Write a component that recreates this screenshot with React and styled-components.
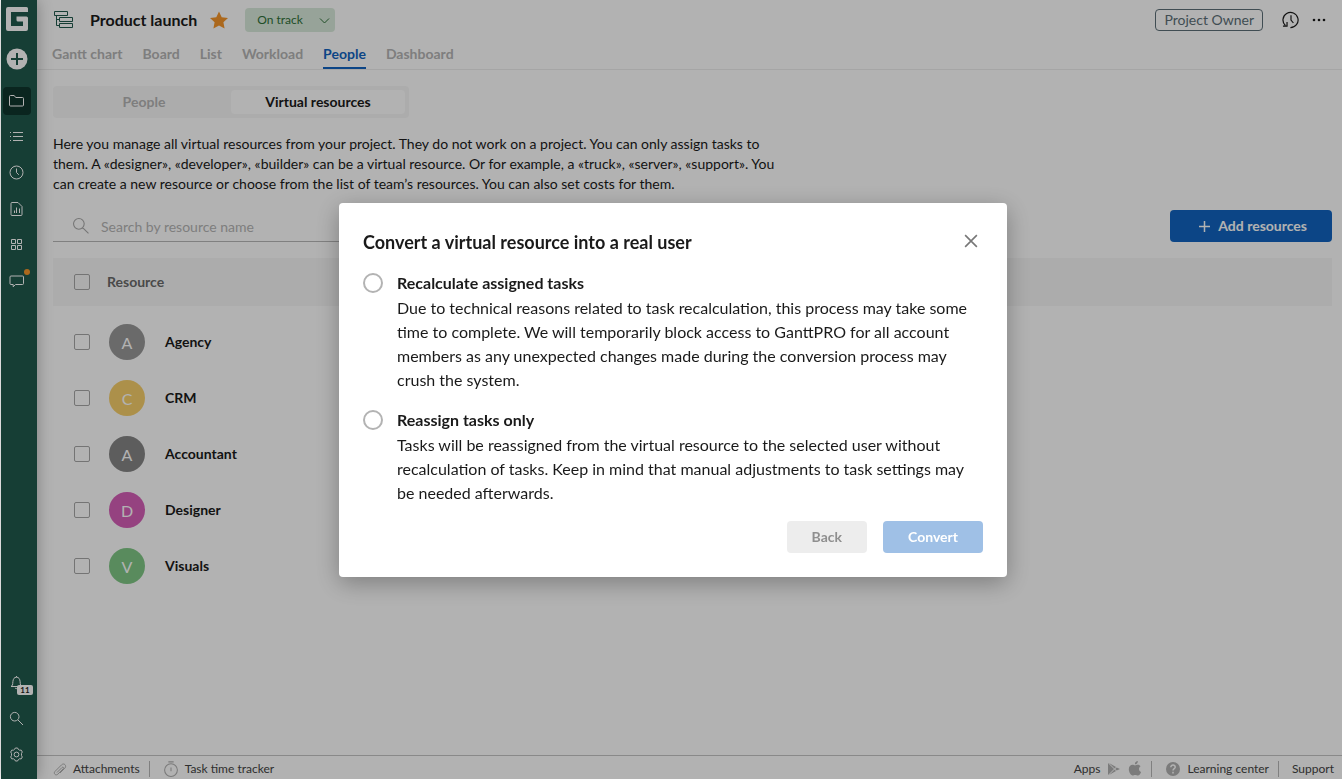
import React, { useState } from 'react'
import styled, { createGlobalStyle } from 'styled-components'

const GlobalStyle = createGlobalStyle`
  * {
    box-sizing: border-box;
  }

  body {
    margin: 0;
    background: #fff;
    color: #1a1a1a;
    font-family: Lato, 'Liberation Sans', sans-serif;
    font-size: 14px;
    line-height: 20px;
  }

  button, input, select {
    font: inherit;
    color: inherit;
    margin: 0;
  }

  button {
    padding: 0;
    border: 0;
    background: none;
    cursor: pointer;
  }

  svg {
    display: block;
    flex: none;
  }
`

const Page = styled.div`
  display: flex;
  min-height: 100vh;
  padding-left: 1px;
`

const Sidebar = styled.nav`
  display: flex;
  flex-direction: column;
  justify-content: space-between;
  flex: none;
  width: 36px;
  padding: 6px 2px 10px;
  background: #20594c;
  color: #fff;
  box-shadow: 0 0 16px rgba(0, 0, 0, 0.3);
  z-index: 1;
`

const SideGroup = styled.div`
  display: flex;
  flex-direction: column;
  gap: 8px;
`

const Brand = styled.a`
  display: flex;
  justify-content: center;
  width: 28px;
  height: 31px;
  padding-top: 1px;
  color: #fff;
`

const SideButton = styled.button`
  position: relative;
  display: flex;
  align-items: center;
  justify-content: center;
  width: 28px;
  height: 28px;
  padding: 0 1px 1px 0;
  border-radius: 4px;
  background: ${({ $active }) => ($active ? '#0f352d' : 'transparent')};
`

const AddButton = styled(SideButton)`
  margin-bottom: 6px;
  padding: 0;
`

const Dot = styled.span`
  position: absolute;
  top: 2px;
  right: 1px;
  width: 6px;
  height: 6px;
  border-radius: 50%;
  background: #f5962a;
`

const Counter = styled.span`
  position: absolute;
  left: 14px;
  top: 16px;
  width: 16px;
  height: 10px;
  border-radius: 2px;
  background: #fff;
  color: #222;
  font-size: 8px;
  font-weight: 700;
  line-height: 10px;
  text-align: center;
`

const Main = styled.div`
  display: flex;
  flex-direction: column;
  flex: 1;
  min-width: 0;
`

const Header = styled.header`
  height: 70px;
  border-bottom: 1px solid #ececec;
`

const TitleRow = styled.div`
  display: flex;
  align-items: center;
  height: 40px;
  padding: 0 14px 0 17px;
`

const Title = styled.h1`
  margin: 0 12px 0 17px;
  font-size: 16px;
  font-weight: 700;
`

const StatusButton = styled.button`
  display: flex;
  align-items: center;
  justify-content: space-between;
  width: 90px;
  height: 24px;
  margin-left: 16px;
  padding: 0 3px 0 12px;
  border-radius: 4px;
  background: #d9eadb;
  color: #2e7038;
  font-size: 12px;
`

const HeaderTools = styled.div`
  display: flex;
  align-items: center;
  gap: 10px;
  margin-left: auto;
`

const RoleTag = styled.span`
  margin-right: 9px;
  padding: 0 8px;
  border: 1px solid #5c6f77;
  border-radius: 4px;
  color: #5c6f77;
`

const Tabs = styled.div`
  display: flex;
  gap: 20px;
  padding: 0 15px;
`

const Tab = styled.a`
  height: 29px;
  padding-top: 4px;
  border-bottom: 2px solid ${({ $active }) => ($active ? '#1264c0' : 'transparent')};
  color: ${({ $active }) => ($active ? '#1264c0' : '#b5b5b5')};
  font-weight: 700;
  text-decoration: none;
`

const Content = styled.main`
  flex: 1;
  padding: 16px 10px 16px 16px;
`

const Segmented = styled.div`
  display: flex;
  width: 356px;
  height: 32px;
  padding: 4px;
  border-radius: 4px;
  background: #f7f7f7;
`

const Segment = styled.button`
  flex: 1;
  border-radius: 4px;
  background: ${({ $active }) => ($active ? '#fff' : 'transparent')};
  color: ${({ $active }) => ($active ? '#1a1a1a' : '#b5b5b5')};
  font-weight: 700;
`

const Intro = styled.p`
  max-width: 732px;
  margin: 16px 0;
`

const Toolbar = styled.div`
  display: flex;
  justify-content: space-between;
  height: 32px;
`

const SearchField = styled.label`
  display: flex;
  align-items: center;
  gap: 10px;
  width: 360px;
  padding-left: 20px;
  border-bottom: 1px solid #b8b8b8;
  color: #a8a8a8;

  input {
    flex: 1;
    padding: 3px 2px 0 2px;
    border: 0;
    outline: 0;
    background: none;
  }

  input::placeholder {
    color: #b5b5b5;
    opacity: 1;
  }
`

const Button = styled.button`
  display: flex;
  align-items: center;
  justify-content: center;
  height: 32px;
  padding: 0 25px;
  border-radius: 4px;
  background: ${({ $primary }) => ($primary ? '#1264c0' : '#ededed')};
  color: ${({ $primary }) => ($primary ? '#fff' : '#8f8f8f')};
  font-weight: 700;

  svg {
    margin: 0 6px 0 2px;
  }

  &:disabled {
    background: #9fc0e6;
    cursor: default;
  }
`

const Table = styled.table`
  width: 100%;
  margin-top: 16px;
  border-collapse: collapse;

  th, td {
    padding: 0;
    text-align: left;
  }

  th {
    height: 48px;
    background: #f7f7f7;
    color: #6a6a6a;
  }

  tbody td {
    height: 56px;
    font-weight: 700;
  }

  tbody::before {
    content: '';
    display: block;
    height: 8px;
  }
`

const CheckCell = styled.td`
  width: 54px;
`

const Checkbox = styled.input.attrs({ type: 'checkbox' })`
  appearance: none;
  display: block;
  width: 16px;
  height: 16px;
  margin: 0 0 0 21px;
  border: 1px solid #a6a6a6;
  border-radius: 2px;
`

const Resource = styled.div`
  display: flex;
  align-items: center;
  gap: 20px;
  padding-left: 2px;
`

const Avatar = styled.span`
  width: 36px;
  height: 36px;
  border-radius: 50%;
  background: ${({ $color }) => $color};
  color: #fff;
  font-size: 16px;
  font-weight: 400;
  line-height: 37px;
  text-align: center;
`

const Footer = styled.footer`
  display: flex;
  justify-content: space-between;
  height: 24px;
  padding: 0 8px 0 15px;
  border-top: 1px solid #c4c4c4;
  color: #444;
  font-size: 12px;
`

const FooterGroup = styled.div`
  display: flex;
  align-items: center;
  gap: 9px;
  padding-top: 3px;
`

const FooterLink = styled.a`
  display: flex;
  align-items: center;
  gap: 6px;
  color: inherit;
  text-decoration: none;

  svg {
    color: #b0b0b0;
  }
`

const Divider = styled.span`
  width: 1px;
  height: 16px;
  margin-right: 4px;
  background: #b8b8b8;
`

const Overlay = styled.div`
  position: fixed;
  inset: 0 0 0 1px;
  display: flex;
  align-items: center;
  justify-content: center;
  padding-left: 3px;
  background: rgba(0, 0, 0, 0.3);
  z-index: 2;
`

const Dialog = styled.section`
  width: 668px;
  max-width: 100%;
  padding: 24px;
  border-radius: 4px;
  background: #fff;
  box-shadow: 0 6px 24px rgba(0, 0, 0, 0.3);
`

const DialogHeader = styled.div`
  display: flex;
  justify-content: space-between;
  height: 28px;
  padding-right: 4px;

  button {
    color: #777;
  }
`

const DialogTitle = styled.h2`
  margin: 0;
  font-size: 18px;
  line-height: 30px;
`

const Option = styled.label`
  display: flex;
  gap: 14px;
  padding-top: 16px;
  font-size: 16px;
  line-height: 24px;

  strong {
    display: block;
    margin-bottom: 1px;
  }
`

const Radio = styled.input.attrs({ type: 'radio' })`
  appearance: none;
  flex: none;
  width: 20px;
  height: 20px;
  margin-top: 2px;
  border: 2px solid #b3b3b3;
  border-radius: 50%;

  &:checked {
    border: 6px solid #1264c0;
  }
`

const DialogActions = styled.div`
  display: flex;
  justify-content: flex-end;
  gap: 16px;
  margin-top: 16px;
`

const icons = {
  folder: <path d="M.5 12V3.500a1 1 0 0 1 1-1h3.700l1.500 2h6.800a1 1 0 0 1 1 1V12a1 1 0 0 1-1 1h-12a1 1 0 0 1-1-1Z" />,
  list: <path d="M1 3.500h1M4 3.500h10M1 7.500h1M4 7.500h10M1 11.500h1M4 11.500h10" />,
  clock: <path d="M14 7.500a6.500 6.500 0 1 1-13 0 6.500 6.500 0 0 1 13 0ZM7.500 3.500v4l2.300 2.300" />,
  report: <path d="M2 12.500v-10a1 1 0 0 1 1-1h6l4 4v8a1 1 0 0 1-1 1H3a1 1 0 0 1-1-1ZM5.500 12V9.500M7.500 12V6.500M10.500 12V7.500" />,
  grid: <path d="M2.500 2.500h4v4h-4ZM8.500 2.500h4v4h-4ZM2.500 8.500h4v4h-4ZM8.500 8.500h4v4h-4Z" />,
  chat: <path d="M1 10.500V4a1 1 0 0 1 1-1h11.500a1 1 0 0 1 1 1v6.500a1 1 0 0 1-1 1H6.500L4.200 13.800V11.500H2a1 1 0 0 1-1-1Z" />,
  bell: <path d="M2 11.500h11M3.500 10c.3-1 .2-2 .4-3.500.3-2.600 1.300-4.300 3.600-4.300s3.300 1.700 3.600 4.300c.2 1.500.1 2.500.400 3.500.300.700.700 1 1.500 1.500M3.500 10c-.3.700-.7 1-1.500 1.500M6 13c.8.8 2.200.8 3 0M7.500 2.200V1" />,
  search: <path d="M10 5.700a4.300 4.300 0 1 1-8.600 0 4.300 4.300 0 0 1 8.600 0ZM8.900 8.900l5.100 5.100" />,
  lens: <path d="M10.500 5.500a5 5 0 1 1-10 0 5 5 0 0 1 10 0ZM9 9l5.500 5.500" />,
  gear: <path d="M5.700 2.200 6.400 1h2.200l.7 1.400 1.300.8 1.600-.1 1.100 1.900-.8 1.400v2.200l.8 1.400-1.100 1.900-1.600-.1-1.300.8-.7 1.400H6.400l-.7-1.400-1.300-.8-1.600.1-1.100-1.900.8-1.400V6.400l-.8-1.400 1.100-1.900 1.600.1ZM9.900 7.500a2.400 2.400 0 1 1-4.800 0 2.400 2.400 0 0 1 4.800 0Z" />,
  chevron: <path d="m3 5.500 4.500 4.500L12 5.500" />,
  plus: <path d="M7.500 2v11M2 7.500h11" />,
  close: <path d="m2 2 11 11M13 2 2 13" />,
  history: <path d="M2.800 12.100A6.300 6.300 0 1 1 7 13.800M.800 12.600h3.400V9.200M7.500 3.500v4l2 2.500" />,
  clip: <path d="m5 10.500 5-5c1-1 2.200.2 1.300 1.200l-5.500 5.500c-2 2-4.800-.8-2.800-2.800l6.500-6.500c2.500-2.500 5.700.8 3.300 3.300L8 11" />,
  timer: <path d="M13.500 8.500a6 6 0 1 1-12 0 6 6 0 0 1 12 0ZM5 .800h5M7.500 6v3.500" />
}

const Icon = ({ name, size = 15, width = 1 }) => (
  <svg
    width={size}
    height={size}
    viewBox="0 0 15 15"
    fill="none"
    stroke="currentColor"
    strokeWidth={width}
    aria-hidden="true"
  >
    {icons[name]}
  </svg>
)

const tabs = ['Gantt chart', 'Board', 'List', 'Workload', 'People', 'Dashboard']

const resources = [
  { name: 'Agency', color: '#989898' },
  { name: 'CRM', color: '#f7cf6b' },
  { name: 'Accountant', color: '#868686' },
  { name: 'Designer', color: '#d65fb8' },
  { name: 'Visuals', color: '#80c886' }
]

const options = [
  {
    id: 'recalculate',
    title: 'Recalculate assigned tasks',
    text: 'Due to technical reasons related to task recalculation, this process may take some time to complete. We will temporarily block access to GanttPRO for all account members as any unexpected changes made during the conversion process may crush the system.'
  },
  {
    id: 'reassign',
    title: 'Reassign tasks only',
    text: 'Tasks will be reassigned from the virtual resource to the selected user without recalculation of tasks. Keep in mind that manual adjustments to task settings may be needed afterwards.'
  }
]

const SideNav = () => (
  <Sidebar>
    <SideGroup>
      <Brand href="#home" aria-label="Home">
        <svg width="22" height="24" viewBox="0 0 22 24">
          <path
            d="M2 0h18.500A1.500 1.500 0 0 1 22 1.500V5H5v14h12v-4.500h-5a1.500 1.500 0 0 1-1.500-1.500V9.500H20.500A1.500 1.500 0 0 1 22 11v11a2 2 0 0 1-2 2H2a2 2 0 0 1-2-2V2a2 2 0 0 1 2-2Z"
            fill="currentColor"
          />
        </svg>
      </Brand>
      <AddButton aria-label="Create">
        <svg width="22" height="22" viewBox="0 0 22 22">
          <circle cx="11" cy="11" r="10.500" fill="#fff" />
          <path d="M11 5v12M5 11h12" stroke="#20594c" strokeWidth="2" />
        </svg>
      </AddButton>
      <SideButton $active aria-label="Projects"><Icon name="folder" /></SideButton>
      <SideButton aria-label="My tasks"><Icon name="list" /></SideButton>
      <SideButton aria-label="Time log"><Icon name="clock" /></SideButton>
      <SideButton aria-label="Reports"><Icon name="report" /></SideButton>
      <SideButton aria-label="Portfolio"><Icon name="grid" /></SideButton>
      <SideButton aria-label="Comments">
        <Icon name="chat" />
        <Dot />
      </SideButton>
    </SideGroup>
    <SideGroup>
      <SideButton aria-label="Notifications">
        <Icon name="bell" />
        <Counter>11</Counter>
      </SideButton>
      <SideButton aria-label="Search"><Icon name="search" /></SideButton>
      <SideButton aria-label="Settings"><Icon name="gear" /></SideButton>
    </SideGroup>
  </Sidebar>
)

const ProjectHeader = () => (
  <Header>
    <TitleRow>
      <svg width="19" height="18" viewBox="0 0 19 18" fill="none" stroke="#20594c">
        <path d="M.500.500h13v4H.500ZM5.500 6.500h13v4h-13ZM5.500 12.500h13v4h-13ZM2.500 4.500v10h3M2.500 8.500h3" />
      </svg>
      <Title>Product launch</Title>
      <svg width="20" height="18" viewBox="0 0 20 18" fill="#f5962a">
        <path d="m10 .500 2.700 5.700 6.300.8-4.600 4.300 1.200 6.200-5.600-3-5.600 3 1.200-6.200L1 7l6.300-.8Z" />
      </svg>
      <StatusButton>
        On track
        <Icon name="chevron" />
      </StatusButton>
      <HeaderTools>
        <RoleTag>Project Owner</RoleTag>
        <button aria-label="History"><Icon name="history" size={18} /></button>
        <button aria-label="More">
          <svg width="18" height="18" viewBox="0 0 18 18" fill="currentColor">
            <circle cx="4" cy="9" r="1.300" />
            <circle cx="9" cy="9" r="1.300" />
            <circle cx="14" cy="9" r="1.300" />
          </svg>
        </button>
      </HeaderTools>
    </TitleRow>
    <Tabs>
      {tabs.map(tab => (
        <Tab key={tab} href="#tab" $active={tab === 'People'}>{tab}</Tab>
      ))}
    </Tabs>
  </Header>
)

const ResourceTable = () => (
  <Table>
    <thead>
      <tr>
        <CheckCell as="th"><Checkbox aria-label="Select all" /></CheckCell>
        <th>Resource</th>
      </tr>
    </thead>
    <tbody>
      {resources.map(({ name, color }) => (
        <tr key={name}>
          <CheckCell><Checkbox aria-label={name} /></CheckCell>
          <td>
            <Resource>
              <Avatar $color={color}>{name[0]}</Avatar>
              {name}
            </Resource>
          </td>
        </tr>
      ))}
    </tbody>
  </Table>
)

const StatusBar = () => (
  <Footer>
    <FooterGroup>
      <FooterLink href="#attachments"><Icon name="clip" />Attachments</FooterLink>
      <Divider />
      <FooterLink href="#tracker"><Icon name="timer" size={16} />Task time tracker</FooterLink>
    </FooterGroup>
    <FooterGroup>
      <FooterLink href="#apps">
        Apps
        <svg width="16" height="14" viewBox="0 0 16 14" fill="currentColor">
          <path d="M2 1v12l6-6ZM3 1l5.500 5.500L10 5ZM3 13l5.500-5.500L10 9ZM10.700 5.400 9.200 7l1.500 1.600L14 7Z" />
        </svg>
        <svg width="14" height="16" viewBox="0 0 14 16" fill="currentColor">
          <path d="M9.800 0c.1 1.900-1.300 3.300-2.900 3.300C6.700 1.600 8.200 0 9.800 0ZM7 4.400c.8 0 1.500-.7 2.800-.7 1.200 0 2.200.6 2.800 1.500-2.400 1.400-2 4.700.5 5.700-.6 1.700-1.800 3.600-3.200 3.600-1 0-1.500-.6-2.700-.6s-1.700.6-2.600.6C2.700 14.500.800 11 .800 8.300c0-2.800 1.800-4.500 3.700-4.500 1.100 0 1.900.6 2.500.6Z" />
        </svg>
      </FooterLink>
      <Divider />
      <FooterLink href="#learning">
        <svg width="16" height="16" viewBox="0 0 16 16">
          <circle cx="8" cy="8" r="7" fill="currentColor" />
          <path d="M5.800 6.200c.1-3 4.600-2.700 4.400 0-.1 1.500-2.200 1.500-2.200 3.300M8 10.800v1.700" fill="none" stroke="#fff" strokeWidth="1.500" />
        </svg>
        Learning center
      </FooterLink>
      <Divider />
      <FooterLink href="#support">Support</FooterLink>
    </FooterGroup>
  </Footer>
)

const ConvertDialog = () => {
  const [mode, setMode] = useState(null)

  return (
    <Overlay>
      <Dialog role="dialog" aria-labelledby="convert-title">
        <DialogHeader>
          <DialogTitle id="convert-title">Convert a virtual resource into a real user</DialogTitle>
          <button aria-label="Close"><Icon name="close" size={16} width={1.5} /></button>
        </DialogHeader>
        {options.map(({ id, title, text }) => (
          <Option key={id}>
            <Radio name="mode" checked={mode === id} onChange={() => setMode(id)} />
            <span>
              <strong>{title}</strong>
              {text}
            </span>
          </Option>
        ))}
        <DialogActions>
          <Button>Back</Button>
          <Button $primary disabled={!mode}>Convert</Button>
        </DialogActions>
      </Dialog>
    </Overlay>
  )
}

const App = () => (
  <>
    <GlobalStyle />
    <Page>
      <SideNav />
      <Main>
        <ProjectHeader />
        <Content>
          <Segmented>
            <Segment>People</Segment>
            <Segment $active>Virtual resources</Segment>
          </Segmented>
          <Intro>
            Here you manage all virtual resources from your project. They do not work on a
            project. You can only assign tasks to them. A «designer», «developer», «builder» can
            be a virtual resource. Or for example, a «truck», «server», «support». You can create
            a new resource or choose from the list of team’s resources. You can also set costs for
            them.
          </Intro>
          <Toolbar>
            <SearchField>
              <Icon name="lens" size={16} />
              <input aria-label="Search by resource name" placeholder="Search by resource name" />
            </SearchField>
            <Button $primary>
              <Icon name="plus" width={1.5} />
              Add resources
            </Button>
          </Toolbar>
          <ResourceTable />
        </Content>
        <StatusBar />
      </Main>
    </Page>
    <ConvertDialog />
  </>
)

export default App
